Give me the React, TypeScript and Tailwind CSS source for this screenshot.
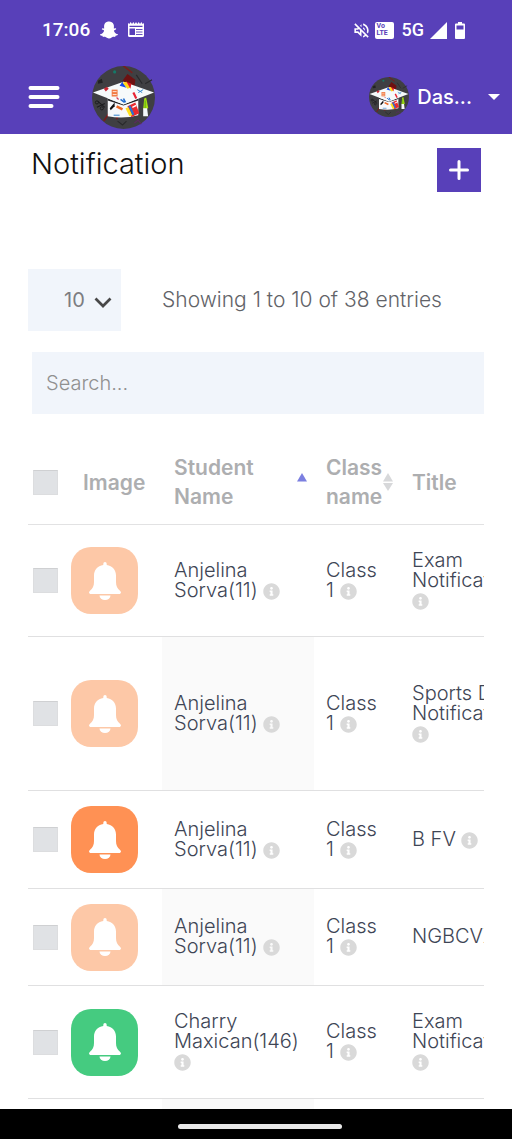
import { FaInfoCircle, FaSnapchatGhost } from "react-icons/fa";
import { MdOutlineVolumeOff } from "react-icons/md";

type Tone = "faded" | "orange" | "green";

interface Row {
  id: number;
  tone: Tone;
  student: string;
  className: string;
  title: string;
  height: string;
  shaded: boolean;
}

const rows: Row[] = [
  { id: 1, tone: "faded", student: "Anjelina Sorva(11)", className: "Class 1", title: "Exam Notification", height: "h-[112px]", shaded: false },
  { id: 2, tone: "faded", student: "Anjelina Sorva(11)", className: "Class 1", title: "Sports Day Notification", height: "h-[154px]", shaded: true },
  { id: 3, tone: "orange", student: "Anjelina Sorva(11)", className: "Class 1", title: "B FV", height: "h-[98px]", shaded: false },
  { id: 4, tone: "faded", student: "Anjelina Sorva(11)", className: "Class 1", title: "NGBCVX", height: "h-[97px]", shaded: true },
  { id: 5, tone: "green", student: "Charry Maxican(146)", className: "Class 1", title: "Exam Notification", height: "h-[113px]", shaded: false },
  { id: 6, tone: "faded", student: "Charry Maxican(146)", className: "Class 1", title: "Exam Notification", height: "h-[113px]", shaded: true },
];

const toneClass: Record<Tone, string> = {
  faded: "bg-[#fdc8a7]",
  orange: "bg-[#ff9154]",
  green: "bg-[#45cb80]",
};

function Logo({ className }: { className: string }) {
  return (
    <svg viewBox="0 0 64 64" className={className} aria-hidden="true">
      <circle cx="32" cy="32" r="32" fill="#3f3f42" />
      <path d="M31 15l5-7 8 6-1 8z" fill="#6d1111" />
      <path d="M32 0l9 7M12 56l9-14M25 54l2-6" stroke="#7a1c1c" strokeWidth="1.6" />
      <path d="M45 9l6 9M54 18l7-4M26 56l5 4 4-4" stroke="#29292b" strokeWidth="1.2" fill="none" />
      <circle cx="23" cy="6" r="1.6" fill="#157a68" />
      <path d="M6 15l4-2 1 4-5 1z" fill="#222224" />
      <path d="M6 36l7 6M5 42l8-4" stroke="#1c1c1e" strokeWidth="1.1" />
      <circle cx="5" cy="37" r="1.6" fill="none" stroke="#1c1c1e" />
      <circle cx="10" cy="43" r="1.6" fill="none" stroke="#1c1c1e" />
      <path d="M43 58l4-3 3 4" stroke="#5b2a5f" strokeWidth="1.2" fill="none" />
      <path d="M16 32h31v18q-15 4-31 1z" fill="#f7f9fb" />
      <path d="M16 33l16 6 15-6v2l-15 5-16-5z" fill="#252528" />
      <path d="M1 27l31-11 31 11-31 12z" fill="#f6fafb" />
      <path d="M12 23l3-2 2 2-3 3z" fill="#c92834" />
      <path d="M28 20l3-4 4 6z" fill="#174bea" />
      <path d="M31 17l4-1 4 6-3 1z" fill="#ffd91a" />
      <path d="M35 16l5 2-1 5z" fill="#e51b22" />
      <path d="M20 24h6v7h-6z" fill="#f27b43" />
      <path d="M21 26h4M21 29h4" stroke="#fff" strokeWidth=".8" />
      <path d="M46 24l5 3M47 27l5-3" stroke="#3489ce" strokeWidth="1" />
      <path d="M42 27l3 6" stroke="#e82435" strokeWidth="2.2" />
      <path d="M29 34l4 3M32 33l2 4" stroke="#246fd0" strokeWidth="1.6" />
      <path d="M25 32l2 2" stroke="#d83b58" strokeWidth="1.2" />
      <path d="M18 43l5-6v4l-4 4z" fill="#111" />
      <path d="M25 41l6 3" stroke="#ef6925" strokeWidth="2.6" />
      <path d="M36 41l8-4 4 11-8 4z" fill="#e92a2e" />
      <path d="M34 43l3-1 4 8-3 1z" fill="#ffe020" />
      <path d="M37 41l4 9 2-1-4-9z" fill="#2475d7" />
      <path d="M41 42l4-2" stroke="#fff" strokeWidth="1.6" />
      <path d="M22 50h6" stroke="#4c94d4" strokeWidth="1.2" />
      <path d="M53 33l2-1 2 10-1 2h-4z" fill="#a6df12" />
      <path d="M54 35v8" stroke="#5cae14" />
      <path d="M52 43h4l1 8h-5z" fill="#f4f7fb" />
    </svg>
  );
}

function Bell() {
  return (
    <svg viewBox="0 0 32 38" className="h-[38px] w-8" fill="white" aria-hidden="true">
      <path d="M14.3 3V1.8a1.700 1.700 0 0 1 3.400 0V3C23.500 3.800 27 8 27 13.500V20c0 4 1.300 6.300 4 8.700 1.800 1.600.9 3.300-1 3.300H2c-1.900 0-2.800-1.700-1-3.300C3.700 26.300 5 24 5 20v-6.500C5 8 8.500 3.800 14.300 3Z" />
      <path d="M10.500 33.500h11a5.500 4.500 0 0 1-11 0Z" />
    </svg>
  );
}

function Info() {
  return <FaInfoCircle className="inline size-[17px] align-[-3px] text-[#d9d9d9]" aria-hidden="true" />;
}

function Check({ label }: { label: string }) {
  return (
    <input
      type="checkbox"
      aria-label={label}
      className="ml-[5px] block size-[25px] appearance-none border border-[#dcdddf] border-t-[#cfd0d2] bg-[#e0e2e5]"
    />
  );
}

function StatusBar() {
  return (
    <div className="flex h-[60px] items-center justify-between pl-[42px] pr-[47px] font-[Roboto,sans-serif] text-[19px] font-medium">
      <div className="flex items-center gap-2.5">
        <span>17:06</span>
        <FaSnapchatGhost className="size-[18px]" />
        <svg viewBox="0 0 16 16" className="size-4" fill="white" aria-hidden="true">
          <path fillRule="evenodd" d="M0 1l1.300 1L2.700 0 4 2l1.300-2 1.400 2L8 0l1.300 2 1.400-2L12 2l1.300-2 1.400 2L16 1v13a1.500 1.500 0 0 1-1.500 1H1.500A1.500 1.500 0 0 1 0 14zM1.500 5h13V3.800h-13zM1.500 6.500V13h5.500V6.500z" />
          <path d="M8 7.500h6.500M8 10h6.500M8 12.500h6.500" stroke="#5840b9" strokeWidth=".9" />
        </svg>
      </div>
      <div className="flex items-center">
        <MdOutlineVolumeOff className="size-[19px]" />
        <span className="ml-1 flex h-[17px] w-[19px] flex-col justify-center rounded-xs bg-white pl-0.5 text-[7px] font-bold leading-[7px] text-[#5840b9]">
          <span>Vo</span>
          <span>LTE</span>
        </span>
        <span className="ml-2 text-lg leading-5">5G</span>
        <svg viewBox="0 0 17 17" className="ml-1.5 size-[17px]" fill="white" aria-hidden="true">
          <path d="M17 0v17H0z" />
        </svg>
        <svg viewBox="0 0 10 17" className="ml-2 h-[17px] w-2.5" aria-hidden="true">
          <path fill="white" fillRule="evenodd" d="M3 0h4v1.500h2a1 1 0 0 1 1 1V16a1 1 0 0 1-1 1H1a1 1 0 0 1-1-1V2.500a1 1 0 0 1 1-1h2zM1.500 3.500v4h7v-4z" />
        </svg>
      </div>
    </div>
  );
}

function SortArrows({ active = false }: { active?: boolean }) {
  return (
    <svg viewBox="0 0 10 18" className="h-[18px] w-2.5" aria-hidden="true">
      <path d="M5 0l5 8.500H0z" fill={active ? "#7b7fe0" : "#d7d8da"} />
      {!active && <path d="M0 10h10l-5 8z" fill="#d7d8da" />}
    </svg>
  );
}

export default function App() {
  return (
    <div className="flex h-screen flex-col overflow-hidden bg-white font-[Inter,sans-serif] text-[#3e4555]">
      <header className="h-[134px] shrink-0 bg-[#5840b9] text-white">
        <StatusBar />
        <nav className="flex h-[74px] items-center justify-between pl-7 pr-3">
          <div className="flex items-center gap-8">
            <button type="button" aria-label="Open menu">
              <svg viewBox="0 0 32 24" className="h-6 w-8" stroke="white" strokeWidth="4" strokeLinecap="round" aria-hidden="true">
                <path d="M2.500 3h27M2.500 12h27M2.500 21h21" />
              </svg>
            </button>
            <Logo className="size-[63px]" />
          </div>
          <button type="button" className="flex items-center">
            <Logo className="size-10" />
            <span className="ml-2 text-xl font-medium">Das...</span>
            <svg viewBox="0 0 12 6" className="ml-4 h-1.5 w-3" fill="white" aria-hidden="true">
              <path d="M0 0h12L6 6z" />
            </svg>
          </button>
        </nav>
      </header>

      <main className="min-h-0 flex-1 overflow-hidden px-7">
        <div className="flex items-start justify-between px-[3px] pt-3.5">
          <h1 className="text-[29px] font-light leading-8 text-[#111]">Notification</h1>
          <button type="button" aria-label="Add notification" className="flex size-11 items-center justify-center bg-[#5840b9]">
            <svg viewBox="0 0 20 20" className="size-5" stroke="white" strokeWidth="3" strokeLinecap="round" aria-hidden="true">
              <path d="M10 1.500v17M1.500 10h17" />
            </svg>
          </button>
        </div>

        <div className="mt-[77px] flex items-center gap-[41px] text-xl text-[#7c7d81]">
          <div className="relative">
            <select aria-label="Entries per page" defaultValue="10" className="h-[62px] w-[93px] appearance-none rounded-none bg-[#f1f5fb] pl-9 text-[#7c7d81]">
              <option>10</option>
              <option>25</option>
              <option>50</option>
            </select>
            <svg viewBox="0 0 18 12" className="pointer-events-none absolute right-[9px] top-7 h-3 w-[18px]" fill="none" stroke="#484848" strokeWidth="2.700" aria-hidden="true">
              <path d="M1.500 1.500L9 9l7.500-7.500" />
            </svg>
          </div>
          <p className="whitespace-nowrap text-[21px] font-light text-[#626368]">Showing 1 to 10 of 38 entries</p>
        </div>

        <div className="pl-1 pt-[21px]">
          <input
            type="search"
            aria-label="Search"
            placeholder="Search..."
            className="block h-[62px] w-full bg-[#f1f5fb] px-3.5 text-xl font-light placeholder:text-[#909090]"
          />
        </div>

        <div className="mt-[26px] overflow-hidden">
          <table className="w-[560px] table-fixed border-separate border-spacing-0 text-left text-xl font-light leading-5">
            <colgroup>
              <col className="w-[43px]" />
              <col className="w-[91px]" />
              <col className="w-[152px]" />
              <col className="w-[86px]" />
              <col />
            </colgroup>
            <thead>
              <tr className="h-[85px] text-[21px] leading-[29px] text-[#adaeb0] [&>th]:border-b [&>th]:border-[#e2e2e3] [&>th]:p-0 [&>th]:font-semibold">
                <th><Check label="Select all" /></th>
                <th><span className="pl-3">Image</span></th>
                <th>
                  <div className="flex items-center justify-between pl-3 pr-[7px]">
                    <span>Student<br />Name</span>
                    <SortArrows active />
                  </div>
                </th>
                <th>
                  <div className="relative pl-3">
                    <span className="absolute right-[7px] top-5"><SortArrows /></span>
                    <span className="relative">Class<br />name</span>
                  </div>
                </th>
                <th><span className="pl-3">Title</span></th>
              </tr>
            </thead>
            <tbody>
              {rows.map((row) => (
                <tr key={row.id} className={`${row.height} [&>td]:border-b [&>td]:border-[#e0e0e1] [&>td]:p-0`}>
                  <td><Check label={`Select notification ${row.id}`} /></td>
                  <td>
                    <div className={`flex size-[67px] items-center justify-center rounded-[20px] ${toneClass[row.tone]}`}>
                      <Bell />
                    </div>
                  </td>
                  <td className={row.shaded ? "bg-[#fafafa]" : ""}>
                    <div className="pb-0.5 pl-3">{row.student} <Info /></div>
                  </td>
                  <td><div className="pb-0.5 pl-3 pr-3">{row.className} <Info /></div></td>
                  <td><div className="w-[130px] pb-0.5 pl-3">{row.title} <Info /></div></td>
                </tr>
              ))}
            </tbody>
          </table>
        </div>
      </main>

      <footer className="flex h-[30px] shrink-0 items-center justify-center bg-black pl-2 pt-1">
        <div className="h-[5px] w-[164px] rounded-full bg-[#e9e9e9]" />
      </footer>
    </div>
  );
}
